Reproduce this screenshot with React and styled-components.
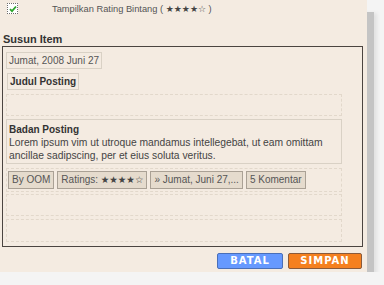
import React from 'react'
import styled, { createGlobalStyle } from 'styled-components'

const GlobalStyle = createGlobalStyle`
  html, body {
    margin: 0;
    padding: 0;
    background: #f4f4f4;
  }
  body {
    font-family: "Liberation Sans", Arial, sans-serif;
    font-size: 10px;
    color: #444;
  }
`

const Panel = styled.div`
  width: 367px;
  height: 272px;
  box-sizing: border-box;
  background: #f4ebe1;
  box-shadow: 9px 10px 0 -2px #c4c4c4, 11px 12px 4px -1px rgba(0, 0, 0, 0.08);
  padding: 3px 0 0 0;
`

const OptionRow = styled.label`
  display: flex;
  align-items: center;
  height: 11px;
  padding-left: 7px;
  color: #555;
`

const Check = styled.span`
  width: 9px;
  height: 9px;
  border: 1px dotted #6d6d6d;
  background: #fff;
  display: flex;
  align-items: center;
  justify-content: center;
`

const OptionText = styled.span`
  margin-left: 34px;
  font-size: 9.3px;
`

const Stars = styled.span`
  font-family: "DejaVu Sans", sans-serif;
  font-size: ${p => p.$size || 9.5}px;
  line-height: 10px;
  color: #444;
`

const Heading = styled.h3`
  margin: 19px 0 0 3px;
  font-size: 11px;
  line-height: 13px;
  font-weight: bold;
  color: #333;
`

const LayoutBox = styled.div`
  margin: 0 0 0 2px;
  width: 361px;
  height: 201px;
  box-sizing: border-box;
  border: 1px solid #4b4440;
  padding: 5px 0 0 3px;
`

const Column = styled.div`
  width: 336px;
  display: flex;
  flex-direction: column;
  align-items: flex-start;
`

const Widget = styled.div`
  box-sizing: border-box;
  border: 1px solid #d9d1c5;
  padding: 0 2px;
  height: ${p => p.$h || 17}px;
  line-height: 15px;
  margin-top: ${p => p.$mt || 0}px;
  margin-left: ${p => p.$ml || 0}px;
  font-weight: ${p => (p.$bold ? 'bold' : 'normal')};
  color: ${p => (p.$bold ? '#333' : '#555')};
  align-self: ${p => (p.$full ? 'stretch' : 'flex-start')};
`

const BodyTitle = styled.div`
  font-weight: bold;
  color: #333;
  line-height: 13px;
  margin-top: 3px;
`

const BodyText = styled.div`
  line-height: 13px;
  font-size: 10.3px;
  color: #444;
`

const DashedArea = styled.div`
  align-self: stretch;
  box-sizing: border-box;
  border: 1px dashed #e2d8cb;
  height: ${p => p.$h}px;
  margin-top: ${p => p.$mt}px;
  display: flex;
  align-items: flex-start;
  gap: 3px;
  padding: 2px 0 0 1px;
`

const Chip = styled.span`
  box-sizing: border-box;
  height: 18px;
  line-height: 16px;
  padding: 0 3px;
  border: 1px solid #aaa195;
  background: #e5dbcd;
  color: #555;
  white-space: nowrap;
`

const ButtonRow = styled.div`
  width: 362px;
  display: flex;
  justify-content: flex-end;
  gap: 5px;
  margin-top: 6px;
`

const Button = styled.button`
  box-sizing: border-box;
  width: ${p => p.$w}px;
  height: 16px;
  border-radius: 2px;
  border: 1px solid ${p => p.$border};
  background: ${p => p.$bg};
  color: #fff;
  font-family: "DejaVu Sans", sans-serif;
  font-size: 10px;
  font-weight: bold;
  letter-spacing: 1px;
  padding: 0;
  line-height: 14px;
`

export default function App() {
  return (
    <>
      <GlobalStyle />
      <Panel>
        <OptionRow>
          <Check>
            <svg width="8" height="8" viewBox="0 0 8 8">
              <path d="M1 4.2 L3 6.2 L7 1.5" stroke="#2ba42b" strokeWidth="1.8" fill="none" />
            </svg>
          </Check>
          <OptionText>
            Tampilkan Rating Bintang ( <Stars $size={9}>★★★★☆</Stars> )
          </OptionText>
        </OptionRow>
        <Heading>Susun Item</Heading>
        <LayoutBox>
          <Column>
            <Widget $mt={0}>Jumat, 2008 Juni 27</Widget>
            <Widget $mt={4} $ml={1} $bold>Judul Posting</Widget>
            <DashedArea $h={22} $mt={4} />
            <Widget $mt={3} $h={45} $full>
              <BodyTitle>Badan Posting</BodyTitle>
              <BodyText>
                Lorem ipsum vim ut utroque mandamus intellegebat, ut eam omittam ancillae sadipscing, per et eius soluta veritus.
              </BodyText>
            </Widget>
            <DashedArea $h={24} $mt={4}>
              <Chip>By OOM</Chip>
              <Chip>Ratings: <Stars>★★★★☆</Stars></Chip>
              <Chip>» Jumat, Juni 27,...</Chip>
              <Chip>5 Komentar</Chip>
            </DashedArea>
            <DashedArea $h={22} $mt={2} />
            <DashedArea $h={23} $mt={3} />
          </Column>
        </LayoutBox>
        <ButtonRow>
          <Button $w={66} $bg="#6699ff" $border="#4a6fb8">BATAL</Button>
          <Button $w={74} $bg="#f5801f" $border="#8a5a3a">SIMPAN</Button>
        </ButtonRow>
      </Panel>
    </>
  )
}
